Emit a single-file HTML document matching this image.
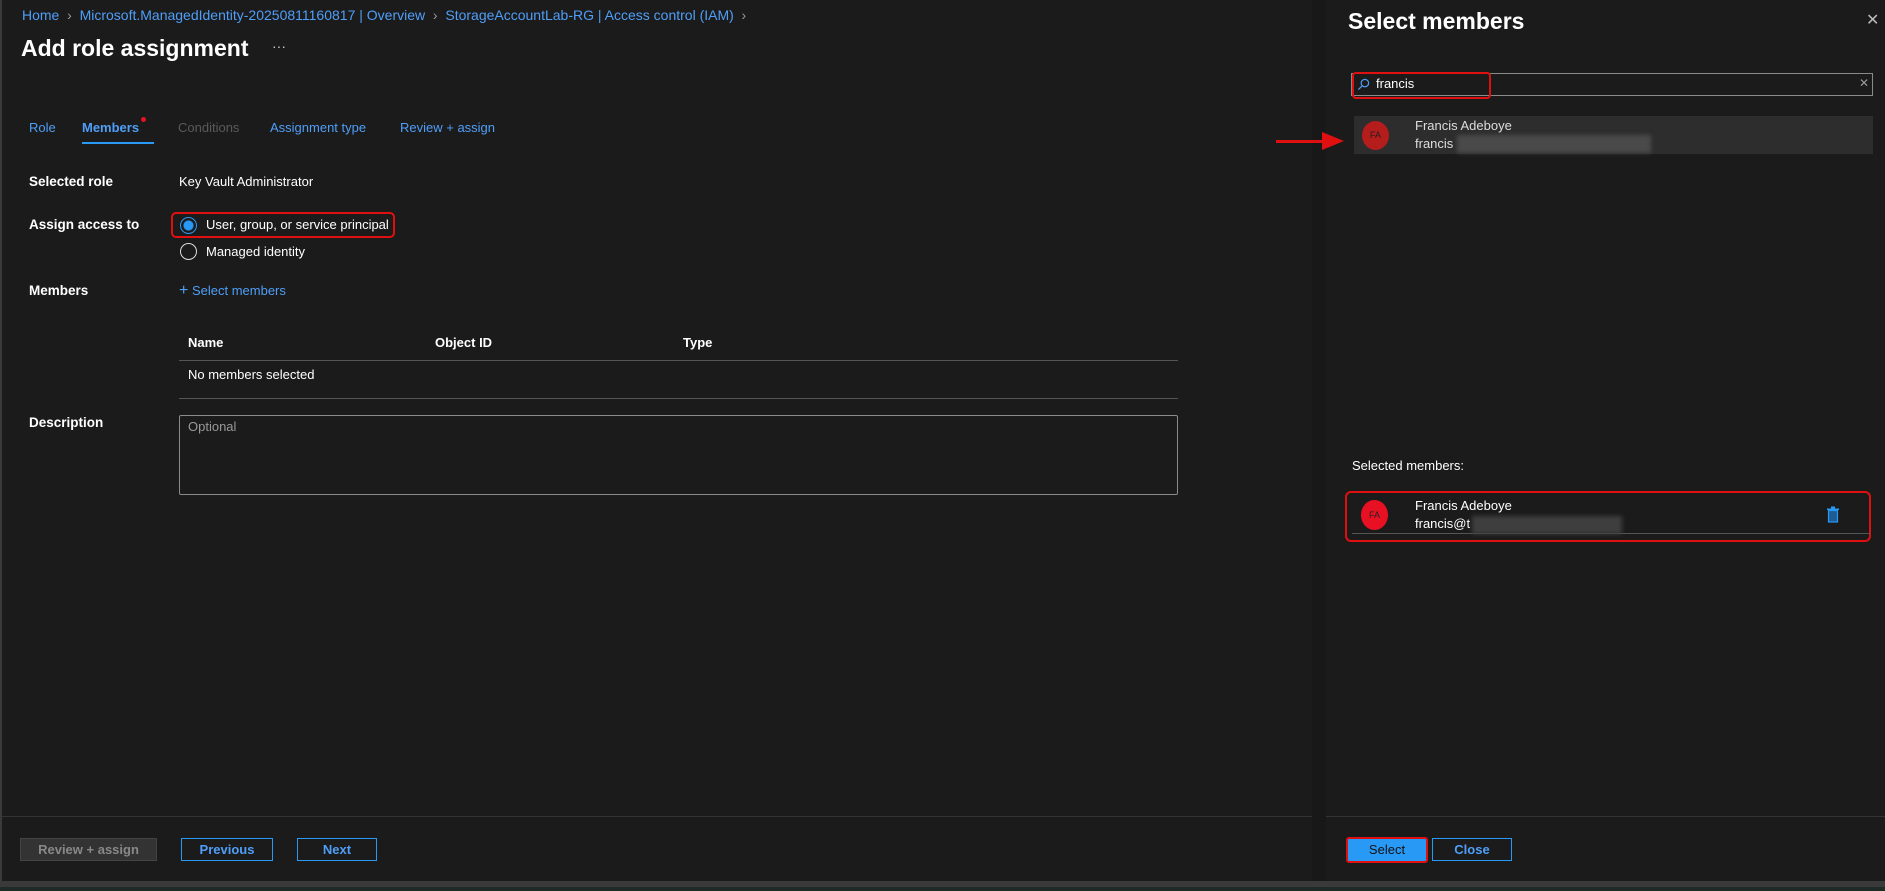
<!DOCTYPE html>
<html><head><meta charset="utf-8"><style>
*{box-sizing:border-box;margin:0;padding:0}
body{width:1885px;height:891px;background:#1b1b1b;font-family:"Segoe UI","Liberation Sans",sans-serif;color:#fff;position:relative;overflow:hidden;font-size:13px}
.a{position:absolute;white-space:nowrap}
.blue{color:#4f9ef8}
.lbl{font-weight:700;font-size:13.5px}
.btn{position:absolute;height:23px;border:1px solid #2899f5;color:#4f9ef8;font-size:13px;text-align:center;line-height:21px;font-weight:600}
</style></head><body>
<div class="a" style="left:0;top:0;width:2px;height:881px;background:#3a3a3a"></div>
<div class="a blue" style="left:22px;top:7px;font-size:14px">Home <span style="color:#999">&nbsp;›&nbsp;</span> Microsoft.ManagedIdentity-20250811160817 | Overview <span style="color:#999">&nbsp;›&nbsp;</span> StorageAccountLab-RG | Access control (IAM) <span style="color:#999">&nbsp;›</span></div>
<div class="a" style="left:21px;top:35px;font-size:23px;font-weight:600">Add role assignment</div>
<div class="a" style="left:272px;top:38px;font-size:14px;color:#ccc">···</div>

<div class="a blue" style="left:29px;top:120px">Role</div>
<div class="a blue" style="left:82px;top:120px;font-weight:600">Members</div>
<div class="a" style="left:141px;top:117px;width:5px;height:5px;border-radius:50%;background:#e81123"></div>
<div class="a" style="left:82px;top:142px;width:72px;height:2px;background:#2899f5"></div>
<div class="a" style="left:178px;top:120px;color:#5a5a5a">Conditions</div>
<div class="a blue" style="left:270px;top:120px">Assignment type</div>
<div class="a blue" style="left:400px;top:120px">Review + assign</div>

<div class="a lbl" style="left:29px;top:174px">Selected role</div>
<div class="a" style="left:179px;top:174px">Key Vault Administrator</div>
<div class="a lbl" style="left:29px;top:217px">Assign access to</div>
<div class="a" style="left:171px;top:212px;width:224px;height:26px;border:2px solid #e01010;border-radius:5px"></div>
<div class="a" style="left:180px;top:217px;width:17px;height:17px;border-radius:50%;border:1px solid #2899f5;background:radial-gradient(circle,#2899f5 4.5px,#1b1b1b 5.5px)"></div>
<div class="a" style="left:206px;top:217px">User, group, or service principal</div>
<div class="a" style="left:180px;top:243px;width:17px;height:17px;border-radius:50%;border:1px solid #ddd"></div>
<div class="a" style="left:206px;top:244px">Managed identity</div>
<div class="a lbl" style="left:29px;top:283px">Members</div>
<div class="a blue" style="left:179px;top:283px"><span style="font-size:16px;line-height:14px">+</span> Select members</div>

<div class="a lbl" style="left:188px;top:335px;font-size:13px">Name</div>
<div class="a lbl" style="left:435px;top:335px;font-size:13px">Object ID</div>
<div class="a lbl" style="left:683px;top:335px;font-size:13px">Type</div>
<div class="a" style="left:179px;top:360px;width:999px;height:1px;background:#555"></div>
<div class="a" style="left:188px;top:367px;font-size:13px">No members selected</div>
<div class="a" style="left:179px;top:398px;width:999px;height:1px;background:#555"></div>
<div class="a lbl" style="left:29px;top:415px">Description</div>
<div class="a" style="left:179px;top:415px;width:999px;height:80px;border:1px solid #8a8a8a;border-radius:2px"></div>
<div class="a" style="left:188px;top:419px;color:#999;font-size:13px">Optional</div>

<div class="a" style="left:2px;top:816px;width:1324px;height:1px;background:#333"></div>
<div class="btn" style="left:20px;top:838px;width:137px;background:#333;border-color:#444;color:#888">Review + assign</div>
<div class="btn" style="left:181px;top:838px;width:92px">Previous</div>
<div class="btn" style="left:297px;top:838px;width:80px">Next</div>

<div class="a" style="left:1312px;top:0;width:14px;height:881px;background:#181818"></div>
<div class="a" style="left:1348px;top:8px;font-size:23px;font-weight:600">Select members</div>
<div class="a" style="left:1866px;top:10px;font-size:16px;color:#bbb">✕</div>
<div class="a" style="left:1351px;top:73px;width:522px;height:23px;border:1px solid #8a8a8a"></div>
<div class="a" style="left:1352px;top:72px;width:139px;height:27px;border:2px solid #e01010;border-radius:4px"></div>
<svg class="a" style="left:1357px;top:78px" width="13" height="13" viewBox="0 0 14 14"><circle cx="8.5" cy="5.5" r="4" fill="none" stroke="#4f9ef8" stroke-width="1.3"/><line x1="5.5" y1="8.5" x2="1.5" y2="12.5" stroke="#4f9ef8" stroke-width="1.3"/></svg>
<div class="a" style="left:1376px;top:76px;font-size:13px">francis</div>
<div class="a" style="left:1859px;top:76px;font-size:12px;color:#999">✕</div>
<div class="a" style="left:1354px;top:116px;width:519px;height:38px;background:#2d2d2d"></div>
<div class="a" style="left:1362px;top:121px;width:27px;height:29px;border-radius:50%;background:#b51c1c;color:#222;font-size:9px;text-align:center;line-height:29px">FA</div>
<div class="a" style="left:1415px;top:118px;font-size:13px;color:#ddd">Francis Adeboye</div>
<div class="a" style="left:1415px;top:136px;font-size:13px;color:#ddd">francis</div>
<div class="a" style="left:1457px;top:135px;width:194px;height:18px;background:#4a4a4a;filter:blur(2px)"></div>
<div class="a" style="left:1276px;top:140px;width:50px;height:3px;background:#e01010"></div>
<svg class="a" style="left:1322px;top:132px" width="22" height="18"><polygon points="0,0 22,9 0,18" fill="#e01010"/></svg>

<div class="a" style="left:1352px;top:458px;font-size:13px">Selected members:</div>
<div class="a" style="left:1345px;top:491px;width:526px;height:51px;border:2px solid #e01010;border-radius:6px"></div>
<div class="a" style="left:1352px;top:533px;width:518px;height:1px;background:#555"></div>
<div class="a" style="left:1361px;top:500px;width:27px;height:30px;border-radius:50%;background:#e81123;color:#222;font-size:9px;text-align:center;line-height:30px">FA</div>
<div class="a" style="left:1415px;top:498px;font-size:13px">Francis Adeboye</div>
<div class="a" style="left:1415px;top:516px;font-size:13px">francis@t</div>
<div class="a" style="left:1472px;top:516px;width:150px;height:18px;background:#3e3e3e;filter:blur(2px)"></div>
<svg class="a" style="left:1826px;top:506px" width="14" height="17" viewBox="0 0 14 17"><rect x="5" y="0.5" width="4" height="2" fill="#2899f5"/><rect x="1" y="2.5" width="12" height="1.5" fill="#2899f5"/><rect x="2.5" y="4.5" width="9" height="11.5" fill="#1f5c94" stroke="#2899f5" stroke-width="1.2"/></svg>

<div class="a" style="left:1326px;top:816px;width:559px;height:1px;background:#333"></div>
<div class="btn" style="left:1346px;top:837px;width:82px;height:26px;background:#2899f5;border:2px solid #e01010;color:#111;line-height:22px;font-weight:400;border-radius:3px">Select</div>
<div class="btn" style="left:1432px;top:838px;width:80px">Close</div>
<div class="a" style="left:0;top:881px;width:1885px;height:10px;background:#3a3a3a"></div>
<div class="a" style="left:0;top:887px;width:1885px;height:4px;background:#1e2a26"></div>
</body></html>
